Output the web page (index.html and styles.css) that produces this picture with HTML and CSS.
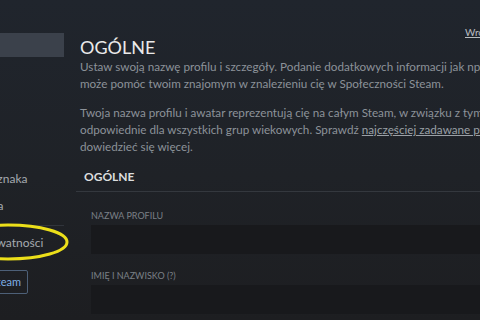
FILE: index.html
```html
<!DOCTYPE html>
<html lang="pl">
<head>
<meta charset="utf-8">
<link rel="stylesheet" href="styles.css">
</head>
<body>
<div class="page">
  <aside class="sidebar">
    <nav class="nav">
      <div class="nav-item active">Ogólne</div>
      <div class="nav-item">Awatar</div>
      <div class="nav-item">Tło profilu</div>
      <div class="nav-item">Miniprofil</div>
      <div class="nav-item">Motyw</div>
      <div class="nav-item">Wyróżniona odznaka</div>
      <div class="nav-item nav-sub">Ulubiona grupa</div>
      <div class="nav-sep"></div>
      <div class="nav-item nav-privacy">Ustawienia prywatności</div>
      <div class="nav-btn"><span>Powrót do profilu Steam</span></div>
    </nav>
  </aside>
  <main class="main">
    <div class="linkrow"><a class="back">Wróć do profilu</a></div>
    <h1 class="title">OGÓLNE</h1>
    <p class="desc">Ustaw swoją nazwę profilu i szczegóły. Podanie dodatkowych informacji jak np. prawdziwe imię<br>może pomóc twoim znajomym w znalezieniu cię w Społeczności Steam.</p>
    <p class="desc">Twoja nazwa profilu i awatar reprezentują cię na całym Steam, w związku z tym muszą być<br>odpowiednie dla wszystkich grup wiekowych. Sprawdź <a class="faq">najczęściej zadawane pytania</a>, aby<br>dowiedzieć się więcej.</p>
    <section class="section">
      <div class="section-title">OGÓLNE</div>
      <div class="field">
        <div class="label">NAZWA PROFILU</div>
        <div class="input"></div>
      </div>
      <div class="field">
        <div class="label">IMIĘ I NAZWISKO (?)</div>
        <div class="input"></div>
      </div>
    </section>
  </main>
</div>
<svg class="mark" width="80" height="50" viewBox="0 0 80 50">
  <ellipse cx="8" cy="17" rx="59" ry="17" fill="none" stroke="#ecdf1a" stroke-width="3"/>
</svg>
</body>
</html>
```

FILE: styles.css
```css
html, body {
  margin: 0;
  padding: 0;
}
body {
  width: 480px;
  height: 320px;
  overflow: hidden;
  background: linear-gradient(180deg, #20252d 0%, #1f2227 55%, #1d1e21 100%);
  font-family: Lato, "Liberation Sans", sans-serif;
  position: relative;
}
.page {
  display: flex;
  width: 480px;
  height: 320px;
}
.sidebar {
  width: 64px;
  flex: none;
  overflow: hidden;
  padding-top: 33px;
}
.nav {
  margin-left: -83px;
  width: 147px;
  display: flex;
  flex-direction: column;
}
.nav-item {
  height: 26.6px;
  line-height: 26px;
  font-size: 12px;
  color: #a5aab0;
  white-space: nowrap;
}
.nav-item.active {
  background: #3b414b;
  height: 24px;
  line-height: 24px;
  margin-bottom: 2.6px;
  color: #e8e8e8;
}
.nav-sub {
  padding-left: 6px;
}
.nav-privacy {
  padding-left: 1px;
}
.nav-sep {
  height: 1px;
  background: #30343b;
  margin: 6px 0 4px;
}
.nav-btn {
  margin-top: 13px;
  width: 103px;
  height: 22px;
  border: 1px solid #4d6078;
  border-radius: 2px;
  color: #7eaee6;
  font-size: 11px;
  line-height: 22px;
  white-space: nowrap;
  display: flex;
  justify-content: flex-end;
  padding-right: 6px;
}
.nav-btn span {
  flex: none;
}
.main {
  flex: 1;
  min-width: 0;
  padding-left: 16px;
}
.linkrow {
  padding-top: 20px;
  padding-left: 385px;
  height: 14px;
  white-space: nowrap;
}
.back {
  font-size: 10px;
  line-height: 12px;
  color: #b8bcc0;
  text-decoration: underline;
}
.title {
  margin: 2px 0 0;
  font-size: 18px;
  line-height: 22px;
  font-weight: 400;
  color: #eaeaea;
}
.desc {
  margin: 0 0 12px;
  font-size: 11.7px;
  line-height: 17px;
  color: #8c9299;
  white-space: nowrap;
}
.faq {
  color: #9aa0a6;
  text-decoration: underline;
}
.section {
  margin-left: -4px;
}
.section-title {
  padding-left: 8px;
  font-size: 12px;
  font-weight: 700;
  color: #dcdedf;
  height: 20px;
  line-height: 20px;
  border-bottom: 1px solid #34383e;
  margin-top: 3px;
  padding-bottom: 4px;
}
.field {
  padding-left: 15px;
  margin-top: 18px;
}
.field + .field {
  margin-top: 16px;
}
.label {
  font-size: 9px;
  line-height: 12px;
  color: #7b8087;
  margin-bottom: 3px;
}
.input {
  height: 29px;
  background: #18191c;
}
.mark {
  position: absolute;
  left: 0;
  top: 225px;
  overflow: visible;
}
```
